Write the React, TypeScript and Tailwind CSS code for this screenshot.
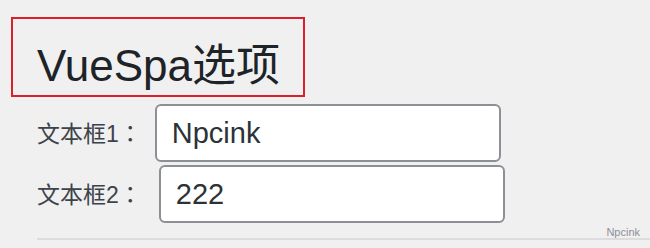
export default function App() {
  return (
    <div className="h-[248px] w-[650px] overflow-hidden bg-[#f0f0f1] pl-[11px] pt-[17px] font-['Liberation_Sans','Noto_Sans_CJK_SC',sans-serif] text-[#1d2327]">
      {/* Title with red highlight box */}
      <div className="h-[80px] w-[294px] border-2 border-[#dc1f2c] pl-[24px] pt-[25px]">
        <h1 className="text-[44px] leading-none font-normal">VueSpa选项</h1>
      </div>

      {/* Fields */}
      <div className="mt-[7px] flex flex-col gap-[3px] pl-[26px]">
        <div className="flex items-center">
          <label className="text-[23px] leading-none text-[#3c434a]">
            文本框1<span className="font-['Noto_Sans_CJK_TC',sans-serif]">：</span>
          </label>
          <input
            defaultValue="Npcink"
            className="ml-[13px] h-[58px] w-[346px] rounded-[6px] border-2 border-[#8c8f94] bg-white pl-[15px] text-[29px] text-[#2c3338] outline-none"
          />
        </div>
        <div className="flex items-center">
          <label className="text-[23px] leading-none text-[#3c434a]">
            文本框2<span className="font-['Noto_Sans_CJK_TC',sans-serif]">：</span>
          </label>
          <input
            defaultValue="222"
            className="ml-[17px] h-[58px] w-[346px] rounded-[6px] border-2 border-[#8c8f94] bg-white pl-[15px] text-[29px] text-[#2c3338] outline-none"
          />
        </div>
      </div>

      {/* Footer */}
      <div className="ml-[26px] mt-[4px]">
        <div className="flex justify-end pr-[10px] text-[11px] leading-none text-[#8c8f94]">Npcink</div>
        <div className="h-[2px] bg-[#dcdcde]" />
      </div>
    </div>
  );
}
